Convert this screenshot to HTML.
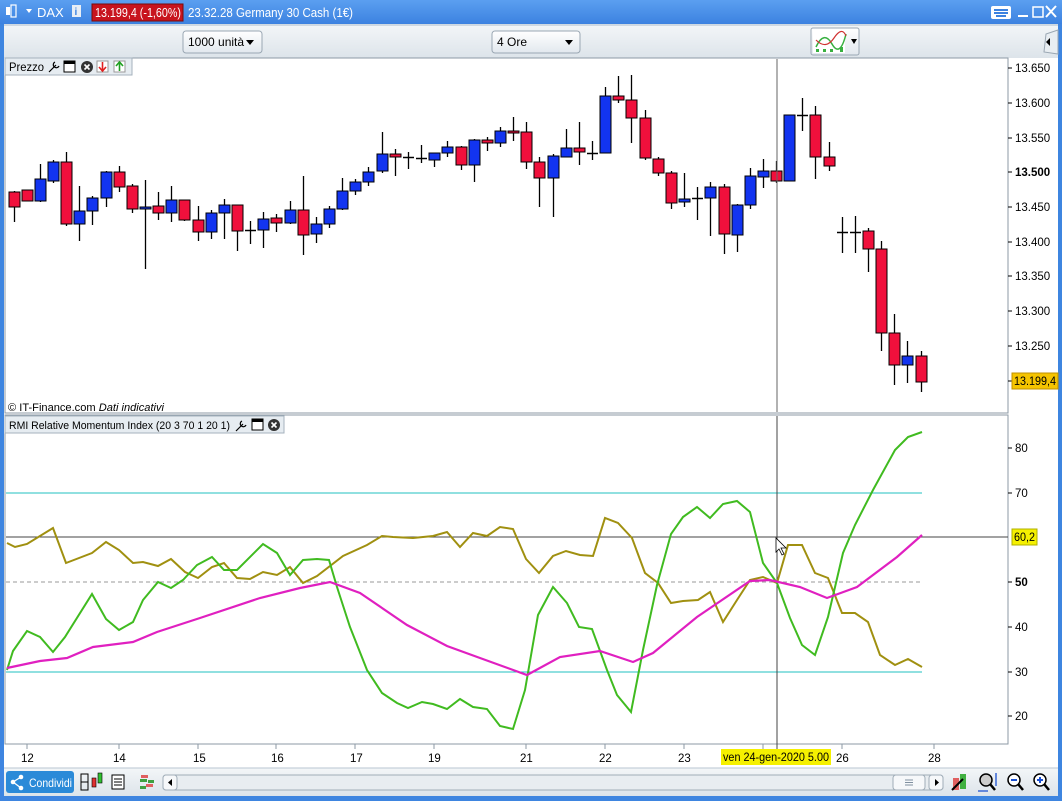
<!DOCTYPE html>
<html><head><meta charset="utf-8"><style>
body{margin:0;width:1062px;height:801px;overflow:hidden;background:#fff;font-family:"Liberation Sans",sans-serif;}
svg{position:absolute;left:0;top:0}
text{font-family:"Liberation Sans",sans-serif}
</style></head><body>
<svg id="s" width="1062" height="801" xmlns="http://www.w3.org/2000/svg">
<defs>
<linearGradient id="tb" x1="0" y1="0" x2="0" y2="1"><stop offset="0" stop-color="#5b9ff0"/><stop offset="1" stop-color="#3c82e0"/></linearGradient>
<linearGradient id="tool" x1="0" y1="0" x2="0" y2="1"><stop offset="0" stop-color="#f3f6f8"/><stop offset="1" stop-color="#dde4ea"/></linearGradient>
<linearGradient id="btn" x1="0" y1="0" x2="0" y2="1"><stop offset="0" stop-color="#ffffff"/><stop offset="1" stop-color="#e2e8ee"/></linearGradient>
</defs>
<rect x="0" y="0" width="1062" height="801" fill="#3e85e0"/>
<rect x="0" y="0" width="1062" height="24" fill="url(#tb)"/>
<rect x="4" y="24" width="1054" height="772" fill="#fff"/>
<rect x="4" y="24" width="1054" height="34" fill="url(#tool)"/>
<line x1="4" y1="25" x2="1058" y2="25" fill="none" stroke="#a9bccd"/>
<rect x="6" y="7" width="4" height="8" fill="#fff"/><rect x="11" y="5" width="5" height="12" fill="none" stroke="#fff" stroke-width="1.2"/>
<path d="M26 9 L32 9 L29 13Z" fill="#fff"/>
<text x="37" y="17" fill="#fff" font-size="13">DAX</text>
<rect x="72" y="5" width="9" height="12" fill="#e8eef5"/><text x="74.5" y="15" font-size="10" font-weight="bold" fill="#3c82e0">i</text>
<rect x="92" y="4" width="91" height="17" fill="#c8141e" stroke="#7a0a0a"/>
<text x="95" y="17" fill="#fff" font-size="12.5" textLength="86" lengthAdjust="spacingAndGlyphs">13.199,4 (-1,60%)</text>
<text x="188" y="17" fill="#fff" font-size="12.5" textLength="165" lengthAdjust="spacingAndGlyphs">23.32.28 Germany 30 Cash (1€)</text>
<rect x="991" y="6" width="20" height="13" rx="2" fill="#fff"/>
<g fill="#3c82e0"><rect x="994" y="9" width="14" height="2"/><rect x="994" y="12" width="14" height="2"/><rect x="996" y="15" width="10" height="2"/></g>
<rect x="1018" y="15" width="10" height="2" fill="#fff"/>
<rect x="1033" y="7" width="10" height="10" fill="none" stroke="#fff" stroke-width="1.5"/>
<path d="M1046 6 L1056 17 M1056 6 L1046 17" stroke="#fff" stroke-width="2"/>
<rect x="183" y="31" width="79" height="22" rx="3" fill="url(#btn)" stroke="#9aa7b3"/>
<text x="188" y="46" font-size="12">1000 unità</text><path d="M246 40 L254 40 L250 45Z" fill="#000"/>
<rect x="492" y="31" width="88" height="22" rx="3" fill="url(#btn)" stroke="#9aa7b3"/>
<text x="497" y="46" font-size="12">4 Ore</text><path d="M565 40 L573 40 L569 45Z" fill="#000"/>
<rect x="811" y="28" width="48" height="27" rx="2" fill="url(#btn)" stroke="#9aa7b3"/>
<rect x="813" y="30" width="32" height="23" fill="#fff"/>
<path d="M816 47 Q824 30 832 44 T846 34" fill="none" stroke="#38b040" stroke-width="1.5"/>
<path d="M816 40 Q826 50 834 38 T846 36" fill="none" stroke="#d03030" stroke-width="1.2"/>
<g fill="#38b040"><rect x="816" y="49" width="3" height="3"/><rect x="823" y="49" width="3" height="3"/><rect x="830" y="49" width="3" height="3"/><rect x="840" y="47" width="3" height="5"/></g>
<path d="M851 39 L857 39 L854 44Z" fill="#000"/>
<path d="M1058 30 L1046 34 L1044 52 L1058 54Z" fill="#e9eef2" stroke="#9aa7b3"/>
<path d="M1046 42 L1050 38 L1050 46Z" fill="#000"/>
<rect x="5" y="58" width="1003" height="355" fill="#fff" stroke="#8c9aa6"/>
<rect x="5" y="415" width="1003" height="329" fill="#fff" stroke="#8c9aa6"/>
<g id="candles"></g>
<g id="rmi"></g>
<rect x="5" y="58" width="127" height="17" fill="#e6ecf1" stroke="#a5b2bd"/>
<text x="9" y="71" font-size="11.5" textLength="35" lengthAdjust="spacingAndGlyphs">Prezzo</text>
<path d="M49 72 L56 65 M55 62 a3 3 0 1 0 4 4" stroke="#000" fill="none" stroke-width="1.2"/>
<rect x="64" y="61" width="11" height="11" fill="#fff" stroke="#000"/><rect x="64" y="61" width="11" height="3" fill="#000"/>
<circle cx="87" cy="67" r="6" fill="#333"/><path d="M84.5 64.5 L89.5 69.5 M89.5 64.5 L84.5 69.5" stroke="#fff" stroke-width="1.6"/>
<rect x="97" y="61" width="11" height="11" fill="#fff" stroke="#999"/><path d="M102.5 62 L102.5 70 M99 67 L102.5 71 L106 67" stroke="#e02020" fill="none" stroke-width="1.6"/>
<rect x="114" y="61" width="11" height="11" fill="#fff" stroke="#999"/><path d="M119.5 71 L119.5 63 M116 66 L119.5 62 L123 66" stroke="#20a020" fill="none" stroke-width="1.6"/>
<text x="8" y="411" font-size="11" textLength="156" lengthAdjust="spacingAndGlyphs">© IT-Finance.com <tspan font-style="italic">Dati indicativi</tspan></text>
<rect x="5" y="416" width="279" height="17" fill="#e6ecf1" stroke="#a5b2bd"/>
<text x="9" y="429" font-size="11" textLength="221" lengthAdjust="spacingAndGlyphs">RMI Relative Momentum Index (20 3 70 1 20 1)</text>
<path d="M236 431 L243 424 M242 421 a3 3 0 1 0 4 4" stroke="#000" fill="none" stroke-width="1.2"/>
<rect x="252" y="419" width="11" height="11" fill="#fff" stroke="#000"/><rect x="252" y="419" width="11" height="3" fill="#000"/>
<circle cx="274" cy="425" r="6" fill="#333"/><path d="M271.5 422.5 L276.5 427.5 M276.5 422.5 L271.5 427.5" stroke="#fff" stroke-width="1.6"/>
<g font-size="11.5" fill="#000">
<g stroke="#000"><line x1="1008" y1="68" x2="1012" y2="68"/><line x1="1008" y1="103" x2="1012" y2="103"/><line x1="1008" y1="138" x2="1012" y2="138"/><line x1="1008" y1="172" x2="1012" y2="172"/><line x1="1008" y1="207" x2="1012" y2="207"/><line x1="1008" y1="242" x2="1012" y2="242"/><line x1="1008" y1="276" x2="1012" y2="276"/><line x1="1008" y1="311" x2="1012" y2="311"/><line x1="1008" y1="346" x2="1012" y2="346"/><line x1="1008" y1="381" x2="1012" y2="381"/></g>
<text x="1015" y="72">13.650</text><text x="1015" y="107">13.600</text><text x="1015" y="142">13.550</text><text x="1015" y="176" font-weight="bold">13.500</text><text x="1015" y="211">13.450</text><text x="1015" y="246">13.400</text><text x="1015" y="280">13.350</text><text x="1015" y="315">13.300</text><text x="1015" y="350">13.250</text>
<rect x="1012" y="373" width="46" height="16" fill="#f5c400" stroke="#c09000"/><text x="1014" y="385" textLength="42" lengthAdjust="spacingAndGlyphs">13.199,4</text>
<g stroke="#000"><line x1="1008" y1="448" x2="1012" y2="448"/><line x1="1008" y1="493" x2="1012" y2="493"/><line x1="1008" y1="582" x2="1012" y2="582"/><line x1="1008" y1="627" x2="1012" y2="627"/><line x1="1008" y1="672" x2="1012" y2="672"/><line x1="1008" y1="716" x2="1012" y2="716"/></g>
<text x="1015" y="452">80</text><text x="1015" y="497">70</text><text x="1015" y="586" font-weight="bold">50</text><text x="1015" y="631">40</text><text x="1015" y="676">30</text><text x="1015" y="720">20</text>
<rect x="1012" y="529" width="25" height="16" fill="#f5f000" stroke="#b0b000"/><text x="1014" y="541" textLength="21" lengthAdjust="spacingAndGlyphs">60,2</text>
</g>
<g font-size="11.5">
<g stroke="#8c9aa6"><line x1="27" y1="744" x2="27" y2="749"/><line x1="119" y1="744" x2="119" y2="749"/><line x1="198" y1="744" x2="198" y2="749"/><line x1="276" y1="744" x2="276" y2="749"/><line x1="355" y1="744" x2="355" y2="749"/><line x1="434" y1="744" x2="434" y2="749"/><line x1="526" y1="744" x2="526" y2="749"/><line x1="605" y1="744" x2="605" y2="749"/><line x1="684" y1="744" x2="684" y2="749"/><line x1="763" y1="744" x2="763" y2="749"/><line x1="842" y1="744" x2="842" y2="749"/><line x1="934" y1="744" x2="934" y2="749"/></g>
<text x="21" y="762">12</text><text x="113" y="762">14</text><text x="193" y="762">15</text><text x="271" y="762">16</text><text x="350" y="762">17</text><text x="428" y="762">19</text><text x="520" y="762">21</text><text x="599" y="762">22</text><text x="678" y="762">23</text><text x="836" y="762">26</text><text x="928" y="762">28</text>
<rect x="721" y="749" width="110" height="16" fill="#f5f000"/><text x="723" y="761" textLength="106" lengthAdjust="spacingAndGlyphs">ven 24-gen-2020 5.00</text>
</g>
<rect x="4" y="768" width="1054" height="28" fill="url(#tool)"/>
<line x1="4" y1="768" x2="1058" y2="768" stroke="#b9c6d2"/>
<rect x="6" y="771" width="68" height="22" rx="3" fill="#2b8ad8"/>
<circle cx="13" cy="782" r="2.3" fill="#fff"/><circle cx="21" cy="777" r="2.3" fill="#fff"/><circle cx="21" cy="788" r="2.3" fill="#fff"/><path d="M13 782 L21 777 M13 782 L21 788" stroke="#fff" stroke-width="1.3"/>
<text x="29" y="787" fill="#fff" font-size="12" textLength="43" lengthAdjust="spacingAndGlyphs">Condividi</text>
<rect x="81" y="774" width="7" height="8" fill="none" stroke="#000"/><rect x="81" y="782" width="7" height="8" fill="none" stroke="#000"/>
<rect x="92" y="778" width="4" height="9" fill="#e03030" stroke="#000" stroke-width=".6"/><rect x="98" y="773" width="4" height="10" fill="#30c030" stroke="#000" stroke-width=".6"/>
<rect x="112" y="775" width="12" height="14" fill="#fff" stroke="#000"/><path d="M114 779 H122 M114 782 H122 M114 785 H122" stroke="#000"/>
<g fill="#e06060"><rect x="141" y="775" width="7" height="3"/><rect x="146" y="784" width="7" height="3"/></g><g fill="#40a040"><rect x="140" y="779" width="7" height="3"/><rect x="140" y="786" width="6" height="3"/><rect x="148" y="780" width="6" height="3"/></g>
<rect x="163" y="775" width="780" height="15" rx="3" fill="#e8edf1" stroke="#a0adb8"/>
<rect x="163" y="775" width="14" height="15" rx="3" fill="#f6f8fa" stroke="#a0adb8"/><path d="M172 779 L168 782.5 L172 786Z" fill="#000"/>
<rect x="893" y="775" width="32" height="15" rx="3" fill="#f6f8fa" stroke="#a0adb8"/><path d="M905 780 H913 M905 782.5 H913 M905 785 H913" stroke="#8090a0"/>
<rect x="929" y="775" width="14" height="15" rx="3" fill="#f6f8fa" stroke="#a0adb8"/><path d="M935 779 L939 782.5 L935 786Z" fill="#000"/>
<rect x="953" y="778" width="6" height="12" fill="#e06060"/><rect x="960" y="774" width="6" height="15" fill="#40b040"/><path d="M952 790 L963 779" stroke="#000" stroke-width="2"/>
<circle cx="986" cy="780" r="6" fill="#ccc" stroke="#000" stroke-width="1.5"/><path d="M990 784 L995 790" stroke="#000" stroke-width="2.5"/><path d="M996 773 V786 M978 791 H988" stroke="#1a4fd0" stroke-width="1.3"/>
<circle cx="1014" cy="780" r="6" fill="#fff" stroke="#000" stroke-width="1.5"/><path d="M1018 784 L1023 790" stroke="#000" stroke-width="2.5"/><path d="M1011 780 H1017" stroke="#1a4fd0" stroke-width="2"/>
<circle cx="1040" cy="780" r="6" fill="#fff" stroke="#000" stroke-width="1.5"/><path d="M1044 784 L1049 790" stroke="#000" stroke-width="2.5"/><path d="M1037 780 H1043 M1040 777 V783" stroke="#1a4fd0" stroke-width="2"/>
</svg>
<script>
var NS="http://www.w3.org/2000/svg";
function el(p,t,a){var e=document.createElementNS(NS,t);for(var k in a)e.setAttribute(k,a[k]);p.appendChild(e);return e;}
var C=[[14,192,207,191,222,'r'],[27,190,201,190,201,'r'],[40,179,201,164,202,'b'],[53,162,181,160,183,'b'],[66,162,224,152,226,'r'],[79,211,224,186,241,'b'],[92,198,211,196,225,'b'],[106,172,198,171,207,'b'],[119,172,187,166,192,'r'],[132,186,209,184,213,'r'],[145,207,209,180,269,'b'],[158,206,213,192,220,'r'],[171,200,213,186,222,'b'],[184,200,220,200,221,'r'],[198,220,232,206,241,'r'],[211,213,232,210,239,'b'],[224,205,213,199,239,'b'],[237,205,231,205,251,'r'],[250,230,231,221,244,'k'],[263,219,230,212,248,'b'],[276,218,223,214,232,'r'],[290,210,223,201,224,'b'],[303,210,235,176,255,'r'],[316,224,234,217,243,'b'],[329,209,224,206,228,'b'],[342,191,209,178,210,'b'],[355,182,191,179,195,'b'],[368,172,182,167,186,'b'],[382,154,171,132,173,'b'],[395,154,157,149,176,'r'],[408,157,157,152,169,'k'],[421,158,158,145,163,'k'],[434,153,160,153,167,'b'],[447,147,153,141,157,'b'],[461,147,165,146,170,'r'],[474,140,165,139,182,'b'],[487,140,143,137,151,'r'],[500,131,143,127,147,'b'],[513,131,133,117,141,'r'],[526,132,162,122,169,'r'],[539,162,178,157,207,'r'],[553,156,178,154,217,'b'],[566,148,157,129,157,'b'],[579,148,152,122,165,'r'],[592,153,153,141,160,'k'],[605,96,153,87,153,'b'],[618,96,100,76,103,'r'],[631,100,118,75,143,'r'],[645,118,158,110,160,'r'],[658,159,173,157,176,'r'],[671,173,203,171,209,'r'],[684,199,202,173,207,'b'],[697,198,198,187,220,'k'],[710,187,198,182,236,'b'],[724,187,234,184,254,'r'],[737,205,235,204,252,'b'],[750,176,205,168,209,'b'],[763,171,177,159,188,'b'],[776,171,181,161,183,'r'],[789,115,181,115,181,'b'],[802,115,115,98,131,'k'],[815,115,157,106,179,'r'],[829,157,166,142,171,'r'],[842,232,232,217,253,'k'],[855,232,232,216,253,'k'],[868,231,249,228,272,'r'],[881,249,333,241,351,'r'],[894,333,365,314,385,'r'],[907,356,365,341,383,'b'],[921,356,382,351,392,'r']];
var g=document.getElementById('candles');
C.forEach(function(c){
 el(g,'line',{x1:c[0]+.5,y1:c[3],x2:c[0]+.5,y2:c[4],stroke:'#000','stroke-width':1.3});
 if(c[5]=='k'||c[2]-c[1]<1){el(g,'line',{x1:c[0]-5,y1:c[1]+.5,x2:c[0]+6,y2:c[1]+.5,stroke:'#000','stroke-width':1.5});}
 else el(g,'rect',{x:c[0]-5,y:c[1],width:11,height:c[2]-c[1],fill:c[5]=='r'?'#f0103c':'#1234f0',stroke:'#000','stroke-width':1});
});
var r=document.getElementById('rmi');
el(r,'line',{x1:6,y1:493,x2:922,y2:493,stroke:'#20c0c0'});
el(r,'line',{x1:6,y1:672,x2:922,y2:672,stroke:'#20c0c0'});
el(r,'line',{x1:6,y1:582,x2:922,y2:582,stroke:'#999','stroke-dasharray':'4,3'});
el(r,'line',{x1:6,y1:537,x2:1008,y2:537,stroke:'#444'});
el(r,'line',{x1:777,y1:59,x2:777,y2:412,stroke:'#666'});
el(r,'line',{x1:777,y1:416,x2:777,y2:749,stroke:'#444'});
var O="7,543 15,547 27,544 53,528 66,563 92,553 106,542 119,550 133,563 143,562 158,566 171,559 185,572 198,578 212,567 224,563 237,578 250,579 263,572 277,575 290,567 303,583 317,576 343,556 367,545 382,536 393,537 413,538 433,536 447,532 460,547 473,533 487,536 500,527 513,529 526,559 539,573 553,556 566,551 580,555 593,556 605,518 618,523 632,538 645,573 658,583 671,603 683,601 698,600 710,592 723,622 737,600 750,580 763,577 777,583 788,545 802,545 815,573 828,578 842,613 855,613 868,622 880,655 895,665 908,659 922,667";
var G="7,670 13,651 27,631 40,637 53,652 65,637 92,594 106,619 119,630 133,622 143,600 158,582 171,588 183,580 197,565 212,557 224,570 237,570 263,544 277,553 290,575 303,560 317,559 329,560 337,587 350,627 367,670 382,693 397,703 408,708 422,702 433,704 447,709 460,699 473,707 480,708 487,709 500,726 513,729 525,690 538,615 553,587 567,603 579,627 592,629 607,670 617,695 631,712 643,650 657,585 671,534 683,517 697,507 710,518 723,504 737,501 750,512 763,563 777,583 790,618 802,645 815,655 828,617 843,553 855,525 873,490 895,450 908,437 922,432";
var M="7,668 40,661 67,658 93,647 133,642 157,632 200,618 260,598 300,588 330,582 360,593 407,625 447,646 480,658 527,675 560,657 600,651 633,662 653,653 697,617 750,581 770,580 800,587 827,598 857,587 897,557 922,535";
el(r,'polyline',{points:O,fill:'none',stroke:'#a09010','stroke-width':2});
el(r,'polyline',{points:G,fill:'none',stroke:'#40bb20','stroke-width':2});
el(r,'polyline',{points:M,fill:'none',stroke:'#e020c0','stroke-width':2.2});
el(r,'path',{d:'M776 538 L776 552 L779 549 L782 555 L784 554 L781 548 L786 548Z',fill:'#fff',stroke:'#000','stroke-width':.8});
</script>
</body></html>
